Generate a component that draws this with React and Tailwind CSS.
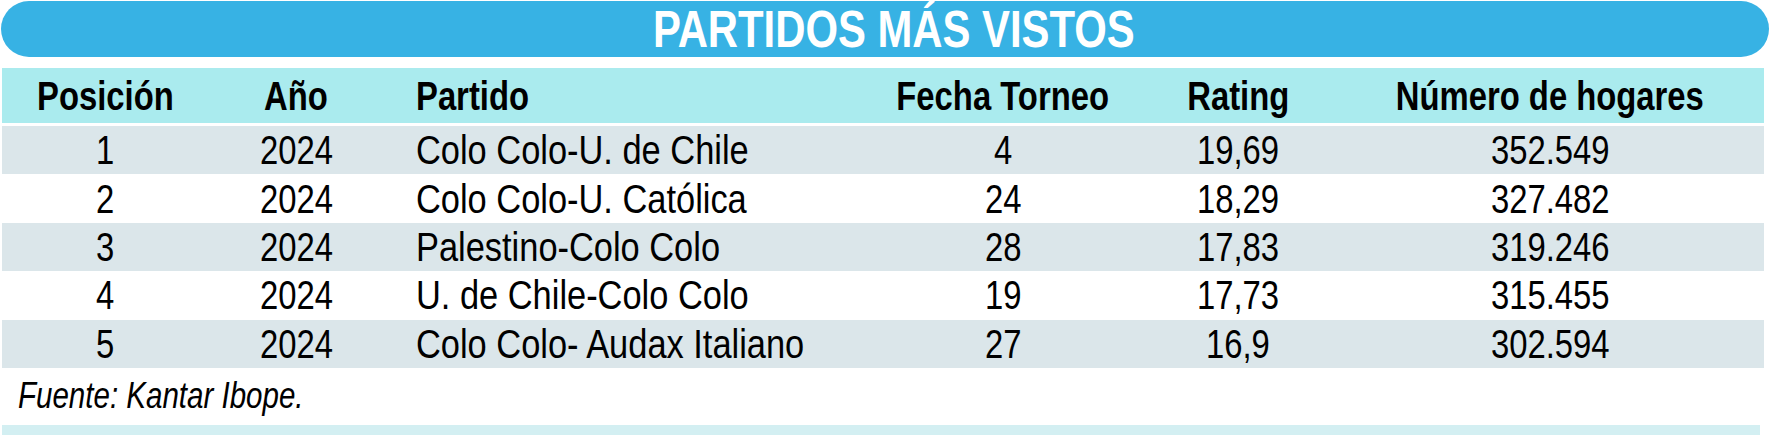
import React from "react";

const rows = [
  ["1", "2024", "Colo Colo-U. de Chile", "4", "19,69", "352.549"],
  ["2", "2024", "Colo Colo-U. Católica", "24", "18,29", "327.482"],
  ["3", "2024", "Palestino-Colo Colo", "28", "17,83", "319.246"],
  ["4", "2024", "U. de Chile-Colo Colo", "19", "17,73", "315.455"],
  ["5", "2024", "Colo Colo- Audax Italiano", "27", "16,9", "302.594"],
];

const cols = "grid grid-cols-[206px_176px_508px_222px_248px_376px]";

// the fonts here have no condensed cut, so narrow the glyphs by hand
const Narrow = ({ children, left }) => (
  <span
    className={`inline-block whitespace-nowrap scale-x-[0.82] ${
      left ? "origin-left" : "origin-center"
    }`}
  >
    {children}
  </span>
);

const Cell = ({ children }) => (
  <div className="flex justify-center">
    <Narrow>{children}</Narrow>
  </div>
);

const App = () => {
  return (
    <div className="w-[1770px] h-[435px] bg-white text-black font-['Liberation_Sans',Arial,sans-serif] overflow-hidden">
      <div className="pt-[1px] px-[1px]">
        <div className="h-[56px] rounded-full bg-[#37b2e4] flex items-center justify-center pl-[18px]">
          <h1 className="text-white font-bold text-[51px] leading-none">
            <Narrow>PARTIDOS MÁS VISTOS</Narrow>
          </h1>
        </div>
      </div>

      <div className="mt-[11px] ml-[2px] w-[1762px]">
        {/* header */}
        <div className={`${cols} h-[55px] items-center bg-[#aaebee] font-bold text-[40px] leading-none`}>
          <Cell>Posición</Cell>
          <Cell>Año</Cell>
          <div className="pl-[32px]"><Narrow left>Partido</Narrow></div>
          <Cell>Fecha Torneo</Cell>
          <Cell>Rating</Cell>
          <Cell>Número de hogares</Cell>
        </div>

        <div className="mt-[3px]">
          {rows.map((r, i) => (
            <div
              key={r[0]}
              className={`${cols} h-[48.4px] items-center text-[40px] leading-none ${
                i % 2 === 0 ? "bg-[#dbe6ea]" : "bg-white"
              }`}
            >
              <Cell>{r[0]}</Cell>
              <Cell>{r[1]}</Cell>
              <div className="pl-[32px]">
                <span className="inline-block whitespace-nowrap scale-x-[0.86] origin-left">
                  {r[2]}
                </span>
              </div>
              <Cell>{r[3]}</Cell>
              <Cell>{r[4]}</Cell>
              <Cell>{r[5]}</Cell>
            </div>
          ))}
        </div>

        <p className="h-[57px] pl-[16px] flex items-center italic text-[36px] leading-none">
          <Narrow left>Fuente: Kantar Ibope.</Narrow>
        </p>
        <div className="h-[10px] w-[1758px] bg-[#d3eff2]" />
      </div>
    </div>
  );
};

export default App;
